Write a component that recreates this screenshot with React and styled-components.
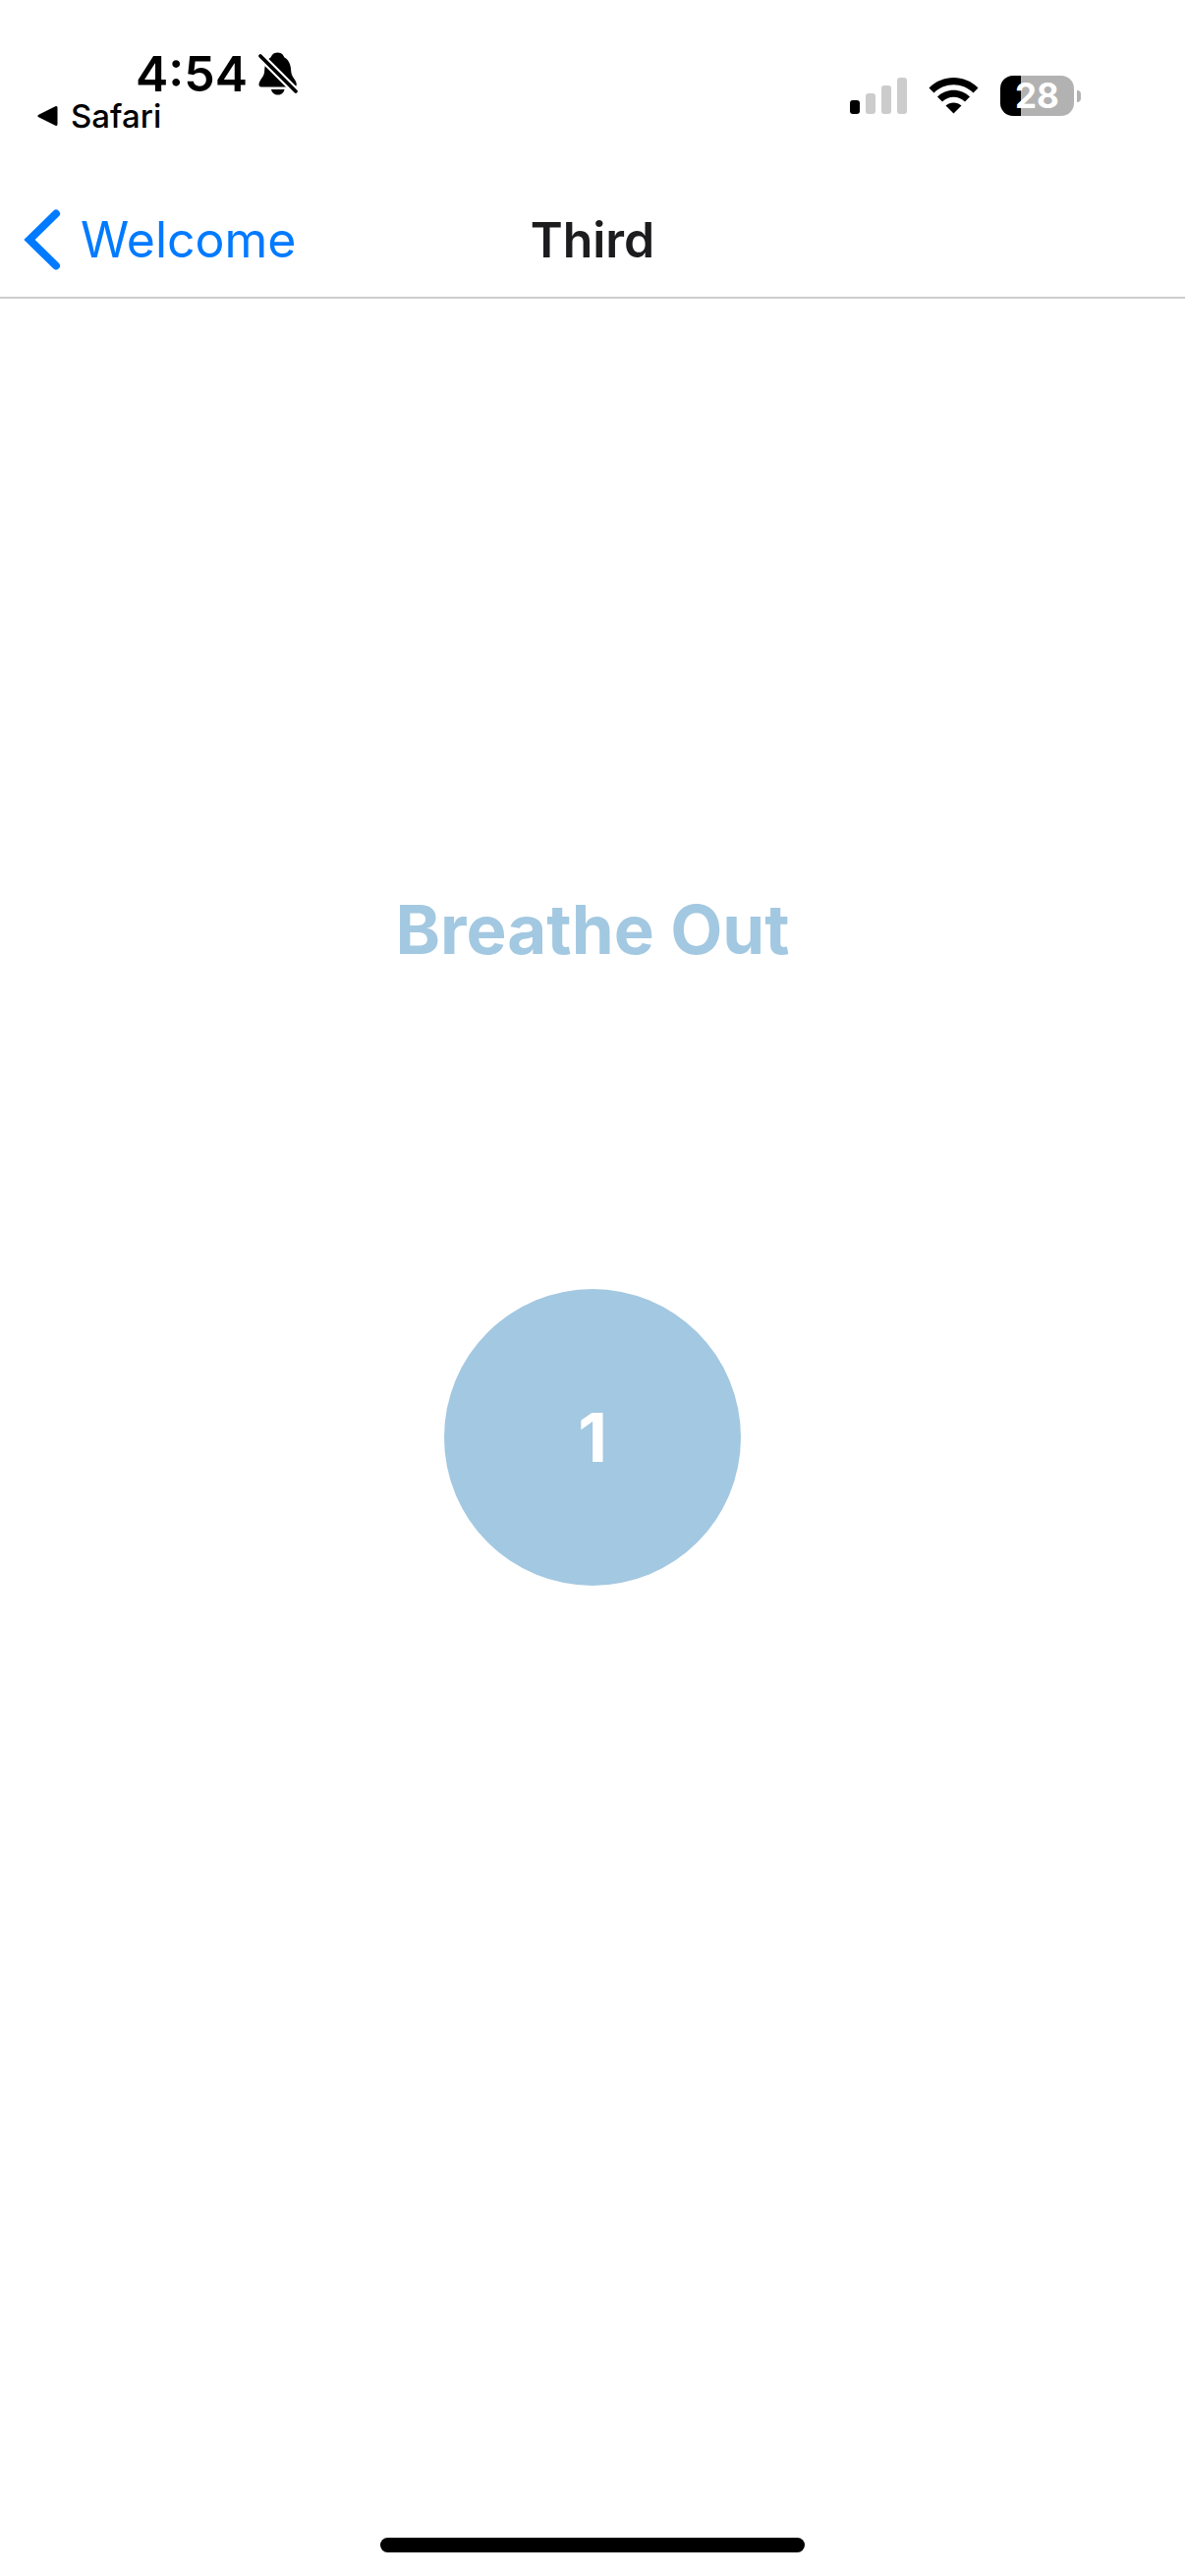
import React from "react";
import styled, { createGlobalStyle } from "styled-components";

const GlobalStyle = createGlobalStyle`
  * { box-sizing: border-box; }
  body {
    margin: 0;
    background: #fff;
    font-family: Inter, "Liberation Sans", sans-serif;
  }
`;

const Screen = styled.div`
  position: relative;
  display: flex;
  flex-direction: column;
  min-height: 100vh;
`;

const StatusBar = styled.div`
  display: flex;
  justify-content: space-between;
  align-items: flex-start;
  height: 186px;
  padding: 50px 106px 0 38px;
  color: #000;
`;

const StatusLeft = styled.div`
  display: flex;
  flex-direction: column;
  align-items: flex-start;
`;

const Clock = styled.div`
  display: flex;
  align-items: center;
  gap: 10px;
  padding-left: 100px;
  font-size: 50px;
  line-height: 50px;
  font-weight: 600;
`;

const BackToApp = styled.a`
  display: flex;
  align-items: center;
  gap: 12px;
  font-size: 33px;
  line-height: 36px;
  font-weight: 500;
  color: inherit;
  text-decoration: none;
`;

const StatusRight = styled.div`
  display: flex;
  align-items: center;
  gap: 22px;
  padding-top: 27px;
`;

const Battery = styled.div`
  display: flex;
  align-items: center;
  gap: 3px;
`;

const BatteryBody = styled.div`
  display: flex;
  align-items: center;
  justify-content: center;
  width: 75px;
  height: 41px;
  border-radius: 13px;
  background: linear-gradient(to right, #000 ${(p) => p.$level}%, #b2b2b2 ${(p) => p.$level}%);
  color: #fff;
  font-size: 35px;
  line-height: 41px;
  font-weight: 700;
`;

const BatteryTip = styled.div`
  width: 4px;
  height: 12px;
  border-radius: 0 6px 6px 0;
  background: #b2b2b2;
`;

const NavBar = styled.header`
  display: grid;
  grid-template-columns: 1fr auto 1fr;
  align-items: center;
  height: 118px;
  padding: 0 24px;
  border-bottom: 2px solid #cdcdcd;
`;

const BackButton = styled.button`
  display: flex;
  align-items: center;
  justify-self: start;
  gap: 20px;
  padding: 0;
  border: 0;
  background: none;
  color: #007aff;
  font: inherit;
  font-size: 50px;
  line-height: 60px;
`;

const Title = styled.h1`
  margin: 0;
  color: #1c1c1e;
  font-size: 50px;
  line-height: 60px;
  font-weight: 600;
`;

const Main = styled.main`
  flex: 1;
  display: grid;
  grid-template-rows: 1fr auto 1fr;
  justify-items: center;
`;

const Phase = styled.h2`
  align-self: end;
  margin: 0 0 324px;
  color: #a3c8e1;
  font-size: 69px;
  line-height: 84px;
  font-weight: 700;
`;

const Circle = styled.div`
  display: flex;
  align-items: center;
  justify-content: center;
  width: 302px;
  height: 302px;
  border-radius: 50%;
  background: #a3c8e1;
  color: #fff;
  font-size: 69px;
  line-height: 84px;
  font-weight: 700;
`;

const HomeIndicator = styled.div`
  position: absolute;
  bottom: 24px;
  left: 50%;
  width: 432px;
  height: 15px;
  transform: translateX(-50%);
  border-radius: 8px;
  background: #000;
`;

const MutedBell = () => (
  <svg width="42" height="44" viewBox="0 0 42 44" aria-label="Silent mode">
    <path
      d="M20.500 0.500C16 .5 14.500 3.500 13.500 5.500C9 8 7.500 13 7.200 19C7 26 1.500 28 1.500 33.500Q1.500 35.500 4 35.500H37.500Q39.800 35.500 39.800 33C39.800 28 34.500 26 34.200 19C34 13 32 8 27.500 5.500C26.500 3.500 25 .5 20.500 .5Z"
    />
    <path d="M14 38H27.500C27 41.500 24 43.500 20.800 43.500S14.500 41.500 14 38Z" />
    <path d="M3 4L39 40" stroke="#fff" strokeWidth="8" />
    <path d="M3 4L39 40" stroke="#000" strokeWidth="3.800" strokeLinecap="round" />
  </svg>
);

const BackTriangle = () => (
  <svg width="22" height="22" viewBox="0 0 22 22" aria-hidden="true">
    <path d="M2 11L19 2.500V19.500Z" stroke="#000" strokeWidth="3" strokeLinejoin="round" />
  </svg>
);

const Signal = () => (
  <svg width="58" height="37" viewBox="0 0 58 37" aria-label="Signal">
    <rect x="0" y="23" width="10" height="14" rx="3" />
    <g fill="#ccc">
      <rect x="16" y="16" width="10" height="21" rx="3" />
      <rect x="32" y="8" width="10" height="29" rx="3" />
      <rect x="48" y="0" width="10" height="37" rx="3" />
    </g>
  </svg>
);

const Wifi = () => (
  <svg width="51" height="37" viewBox="0 0 51 37" aria-label="Wi-Fi">
    <path d="M.5 10.500C14 -3.500 37 -3.500 50.500 10.500L45.500 15.500C34.500 4.500 16.500 4.500 5.500 15.500Z" />
    <path d="M9 19.500C18 10.500 33 10.500 42 19.500L37 24.500C30.500 18 20.500 18 14 24.500Z" />
    <path d="M17.500 28.500C22 24.500 29 24.500 33.500 28.500L25.500 36.500Z" />
  </svg>
);

const Chevron = () => (
  <svg width="38" height="62" viewBox="0 0 38 62" aria-hidden="true">
    <path
      d="M33 4.500L6 31L33 57.500"
      fill="none"
      stroke="currentColor"
      strokeWidth="8"
      strokeLinecap="round"
    />
  </svg>
);

export default function App() {
  return (
    <Screen>
      <GlobalStyle />
      <StatusBar>
        <StatusLeft>
          <Clock>
            4:54
            <MutedBell />
          </Clock>
          <BackToApp href="#safari">
            <BackTriangle />
            Safari
          </BackToApp>
        </StatusLeft>
        <StatusRight>
          <Signal />
          <Wifi />
          <Battery>
            <BatteryBody $level={28}>28</BatteryBody>
            <BatteryTip />
          </Battery>
        </StatusRight>
      </StatusBar>
      <NavBar>
        <BackButton type="button">
          <Chevron />
          Welcome
        </BackButton>
        <Title>Third</Title>
      </NavBar>
      <Main>
        <Phase>Breathe Out</Phase>
        <Circle>1</Circle>
      </Main>
      <HomeIndicator />
    </Screen>
  );
}
